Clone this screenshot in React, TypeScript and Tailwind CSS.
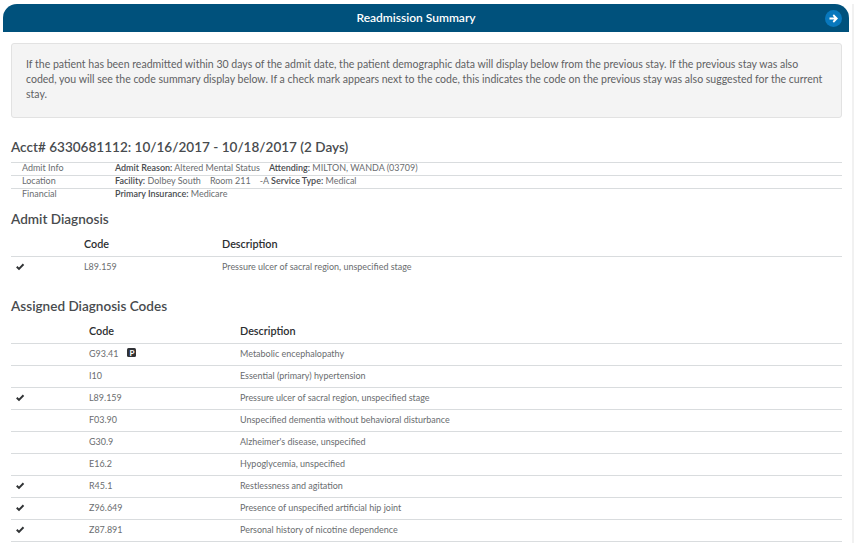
type Row = { code: string; description: string; checked?: boolean; primary?: boolean };

const admitRows: Row[] = [
  { code: "L89.159", description: "Pressure ulcer of sacral region, unspecified stage", checked: true },
];

const assignedRows: Row[] = [
  { code: "G93.41", description: "Metabolic encephalopathy", primary: true },
  { code: "I10", description: "Essential (primary) hypertension" },
  { code: "L89.159", description: "Pressure ulcer of sacral region, unspecified stage", checked: true },
  { code: "F03.90", description: "Unspecified dementia without behavioral disturbance" },
  { code: "G30.9", description: "Alzheimer's disease, unspecified" },
  { code: "E16.2", description: "Hypoglycemia, unspecified" },
  { code: "R45.1", description: "Restlessness and agitation", checked: true },
  { code: "Z96.649", description: "Presence of unspecified artificial hip joint", checked: true },
  { code: "Z87.891", description: "Personal history of nicotine dependence", checked: true },
];

function CheckMark() {
  return (
    <svg viewBox="0 0 16 14" className="mb-px h-[7px] w-2 overflow-visible">
      <path d="M1.5 7.5 6 12 15 2.5" fill="none" stroke="#303335" strokeWidth="3.8" />
    </svg>
  );
}

function ArrowRight() {
  return (
    <svg viewBox="0 0 18 18" className="mr-px size-[9px] overflow-visible">
      <path d="M1 9h14M8.5 2l7 7-7 7" fill="none" stroke="currentColor" strokeWidth="3.6" />
    </svg>
  );
}

function CodeTable({ rows, columns }: { rows: Row[]; columns: string }) {
  return (
    <div>
      <div className={`grid h-6 items-center text-[10.8px] font-semibold text-[#2b2e30] ${columns}`}>
        <span />
        <span>Code</span>
        <span>Description</span>
      </div>
      {rows.map((row) => (
        <div
          key={row.code}
          className={`grid h-[22px] items-center border-t border-[#d9dcde] pb-[2px] text-[8.97px] text-[#6a6d6f] ${columns}`}
        >
          <span className="pl-[5px]">{row.checked && <CheckMark />}</span>
          <span className="flex items-center gap-[9px]">
            {row.code}
            {row.primary && (
              <span className="mb-px flex h-[9px] w-[9px] items-center justify-center rounded-[1.5px] bg-[#303236] text-[8px] leading-none font-bold text-white">
                P
              </span>
            )}
          </span>
          <span>{row.description}</span>
        </div>
      ))}
    </div>
  );
}

export default function App() {
  return (
    <div className="flex h-[543px] w-[855px] overflow-hidden bg-white pt-1 pl-[3px] font-['Lato',sans-serif] text-[#4a4d4f]">
      <main className="w-[846px] shrink-0">
        <header className="flex h-7 items-center rounded-t-[14px] bg-[#00517c] pr-[7px]">
          <h1 className="flex-1 pl-1 text-center text-[12px] font-semibold text-white">Readmission Summary</h1>
          <button className="flex size-[17px] items-center justify-center rounded-full bg-[#0878bd] text-white">
            <ArrowRight />
          </button>
        </header>
        <div className="pl-2">
          <p className="mt-[11px] h-[75px] w-[831px] rounded-[3px] border border-[#e2e2e2] bg-[#f4f4f4] pt-[13px] pl-[14px] text-[10.54px] leading-[15px] whitespace-nowrap text-[#5f6163]">
            If the patient has been readmitted within 30 days of the admit date, the patient demographic data will display below from the previous stay. If the previous stay was also
            <br />
            coded, you will see the code summary display below. If a check mark appears next to the code, this indicates the code on the previous stay was also suggested for the current
            <br />
            stay.
          </p>
          <h2 className="mt-5 h-[24px] text-[13.55px] leading-[18px] font-semibold text-[#484b4e]">
            Acct# 6330681112: 10/16/2017 - 10/18/2017 (2 Days)
          </h2>
          <div className="w-[831px] text-[8.97px] leading-[10px] text-[#6a6d6f] [&_b]:font-semibold [&_b]:text-[#484b4e]">
            <div className="grid h-[13px] grid-cols-[93px_1fr] border-t border-[#d9dcde] pl-[11px]">
              <span>Admit Info</span>
              <span><b>Admit Reason:</b> Altered Mental Status<b className="ml-[9px]">Attending:</b> MILTON, WANDA (03709)</span>
            </div>
            <div className="grid h-[13px] grid-cols-[93px_1fr] border-t border-[#d9dcde] pl-[11px]">
              <span>Location</span>
              <span><b>Facility:</b> Dolbey South<span className="mx-[9px]">Room 211</span>-A <b>Service Type:</b> Medical</span>
            </div>
            <div className="grid h-[13px] grid-cols-[93px_1fr] border-t border-[#d9dcde] pl-[11px]">
              <span>Financial</span>
              <span><b>Primary Insurance:</b> Medicare</span>
            </div>
          </div>
          <section className="mt-[9px] w-[831px]">
            <h2 className="mb-[4px] h-[18px] text-[13.55px] leading-[18px] font-semibold text-[#484b4e]">Admit Diagnosis</h2>
            <CodeTable rows={admitRows} columns="grid-cols-[73px_138px_1fr]" />
          </section>
          <section className="mt-[19px] w-[831px]">
            <h2 className="mb-[4px] h-[18px] text-[13.55px] leading-[18px] font-semibold text-[#484b4e]">Assigned Diagnosis Codes</h2>
            <CodeTable rows={assignedRows} columns="grid-cols-[78px_151px_1fr]" />
            <div className="border-t border-[#d9dcde]" />
          </section>
        </div>
      </main>
      <div className="ml-[3px] w-[2px] bg-[#f1f1f1]" />
    </div>
  );
}
